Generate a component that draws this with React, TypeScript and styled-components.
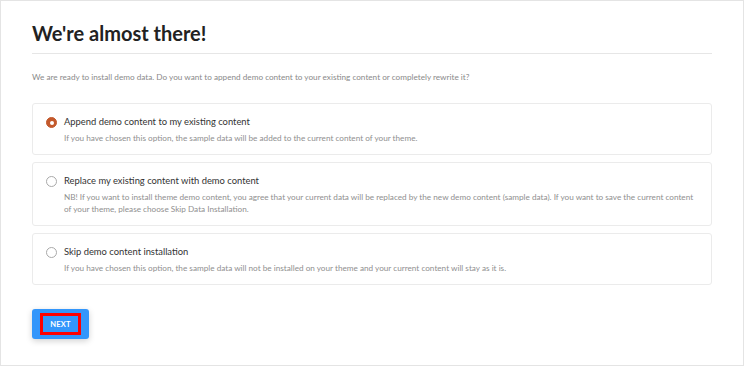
import React, { useState } from 'react'
import styled, { createGlobalStyle } from 'styled-components'

const GlobalStyle = createGlobalStyle`
  html, body {
    margin: 0;
    padding: 0;
    background: #f1f1f1;
  }
  * {
    box-sizing: border-box;
  }
`

interface Option {
  id: string
  title: string
  text: string
}

const options: Option[] = [
  {
    id: 'append',
    title: 'Append demo content to my existing content',
    text: 'If you have chosen this option, the sample data will be added to the current content of your theme.',
  },
  {
    id: 'replace',
    title: 'Replace my existing content with demo content',
    text: 'NB! If you want to install theme demo content, you agree that your current data will be replaced by the new demo content (sample data). If you want to save the current content of your theme, please choose Skip Data Installation.',
  },
  {
    id: 'skip',
    title: 'Skip demo content installation',
    text: 'If you have chosen this option, the sample data will not be installed on your theme and your current content will stay as it is.',
  },
]

const App: React.FC = () => {
  const [choice, setChoice] = useState('append')

  return (
    <>
      <GlobalStyle />
      <Panel>
        <Heading>We're almost there!</Heading>
        <Intro>
          We are ready to install demo data. Do you want to append demo content to your existing content or completely rewrite it?
        </Intro>
        <OptionList>
          {options.map((o) => (
            <OptionCard key={o.id} onClick={() => setChoice(o.id)}>
              <Radio checked={choice === o.id} />
              <OptionBody>
                <OptionTitle>{o.title}</OptionTitle>
                <OptionText>{o.text}</OptionText>
              </OptionBody>
            </OptionCard>
          ))}
        </OptionList>
        <NextButton>
          <FocusRing>NEXT</FocusRing>
        </NextButton>
      </Panel>
    </>
  )
}

const Panel = styled.div`
  width: 744px;
  height: 366px;
  background: #fff;
  border: 1px solid #e4e4e4;
  padding: 20px 31px 0 31px;
  font-family: Lato, 'Noto Sans', sans-serif;
`

const Heading = styled.h1`
  margin: 0;
  padding: 0 0 8px;
  font-size: 20px;
  font-weight: 700;
  line-height: 24px;
  color: #222;
  border-bottom: 1px solid #e6e6e6;
`

const Intro = styled.p`
  margin: 17px 0 0;
  font-size: 8.2px;
  line-height: 12px;
  color: #8a8a8a;
`

const OptionList = styled.div`
  display: flex;
  flex-direction: column;
  gap: 7px;
  margin-top: 20px;
`

const OptionCard = styled.label`
  display: flex;
  align-items: flex-start;
  gap: 7px;
  padding: 12px 12px 10px 13px;
  border: 1px solid #ebebeb;
  border-radius: 3px;
  cursor: pointer;
`

const Radio = styled.span<{ checked: boolean }>`
  flex: none;
  width: 11px;
  height: 11px;
  margin-top: 1px;
  border-radius: 50%;
  border: 1px solid ${(p) => (p.checked ? '#c3592c' : '#a9a9a9')};
  background: ${(p) => (p.checked ? '#c3592c' : '#fff')};
  display: flex;
  align-items: center;
  justify-content: center;

  &::after {
    content: '';
    width: 4px;
    height: 4px;
    border-radius: 50%;
    background: #fff;
    display: ${(p) => (p.checked ? 'block' : 'none')};
  }
`

const OptionBody = styled.div`
  display: flex;
  flex-direction: column;
  gap: 4px;
`

const OptionTitle = styled.div`
  font-size: 9.4px;
  line-height: 12px;
  color: #333;
`

const OptionText = styled.div`
  font-size: 8.2px;
  line-height: 12px;
  color: #8f8f8f;
`

const NextButton = styled.button`
  margin-top: 24px;
  width: 57px;
  height: 30px;
  padding: 0;
  border: none;
  border-radius: 3px;
  background: #3396fb;
  box-shadow: 0 2px 6px rgba(0, 0, 0, 0.18);
  display: flex;
  align-items: center;
  justify-content: center;
  cursor: pointer;
`

const FocusRing = styled.span`
  display: flex;
  align-items: center;
  justify-content: center;
  width: 41px;
  height: 22px;
  border: 3px solid #ff0000;
  color: #fff;
  font-family: Lato, 'Noto Sans', sans-serif;
  font-size: 7.5px;
  font-weight: 700;
  letter-spacing: 0.2px;
`

export default App
